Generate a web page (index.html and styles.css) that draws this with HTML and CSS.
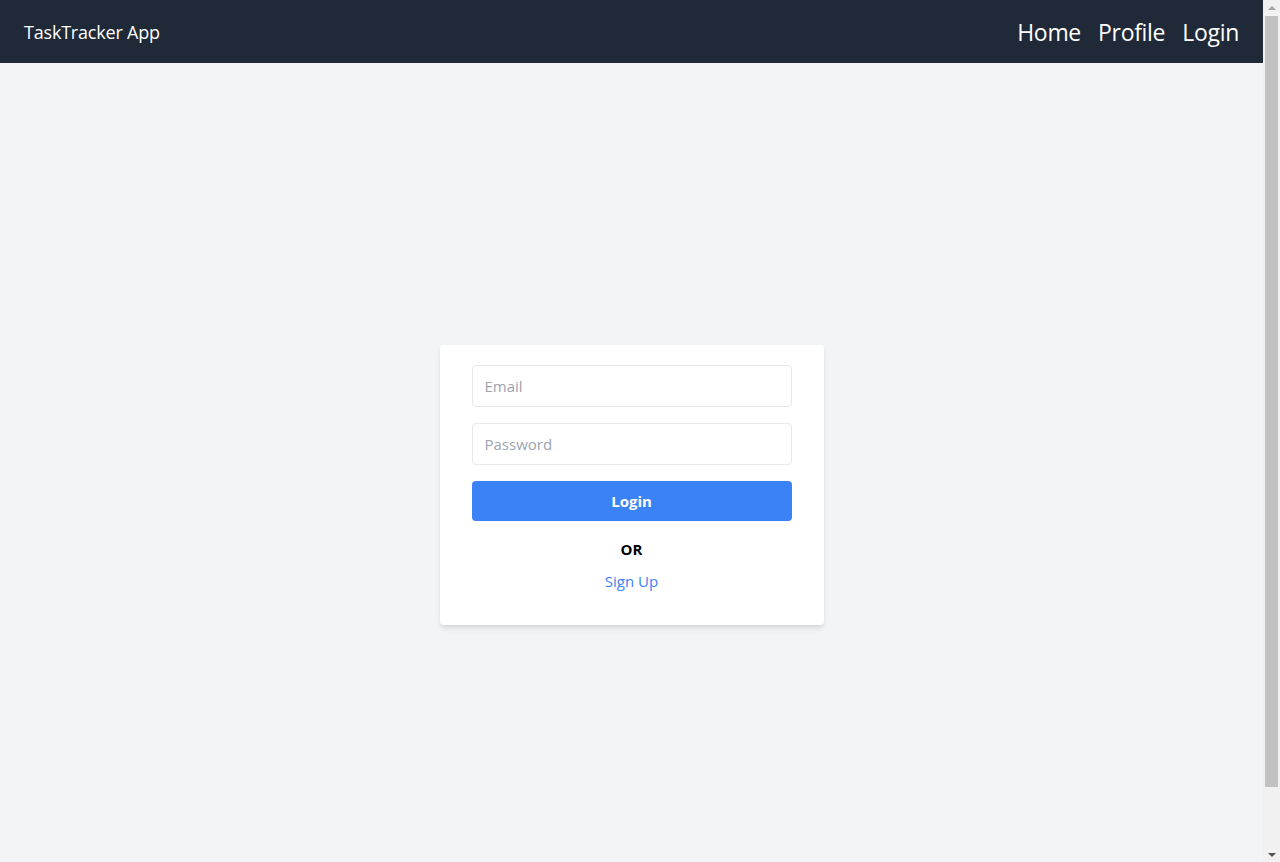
FILE: index.html
```html
<!DOCTYPE html>
<html lang="en">
<head>
<meta charset="utf-8">
<title>TaskTracker App</title>
<link rel="stylesheet" href="styles.css">
</head>
<body>
<div class="page">
  <header class="topbar">
    <div class="brand">TaskTracker App</div>
    <nav class="nav">
      <a href="#" class="nav-link">Home</a>
      <a href="#" class="nav-link">Profile</a>
      <a href="#" class="nav-link">Login</a>
    </nav>
  </header>
  <main class="main">
    <form class="card">
      <input class="field" type="email" placeholder="Email">
      <input class="field" type="password" placeholder="Password">
      <button class="btn" type="button">Login</button>
      <div class="or">OR</div>
      <a href="#" class="signup">Sign Up</a>
    </form>
  </main>
</div>
<div class="scrollbar" aria-hidden="true">
  <div class="sb-arrow sb-up"></div>
  <div class="sb-track"><div class="sb-thumb"></div></div>
  <div class="sb-arrow sb-down"></div>
</div>
</body>
</html>
```

FILE: styles.css
```css
* { box-sizing: border-box; }
html, body { margin: 0; padding: 0; }
body {
  font-family: "Open Sans", "Noto Sans", sans-serif;
  background: #f3f4f6;
  color: #000;
}
.page {
  margin-right: 17px;
}
.topbar {
  height: 63px;
  background: #1f2937;
  display: flex;
  align-items: center;
  justify-content: space-between;
  padding: 0 24px;
}
.brand {
  color: #fff;
  font-size: 18px;
  letter-spacing: -0.2px;
}
.nav {
  display: flex;
  gap: 17px;
}
.nav-link {
  color: #fff;
  text-decoration: none;
  font-size: 23px;
  letter-spacing: -0.3px;
}
.main {
  min-height: 862px;
  display: flex;
  align-items: center;
  justify-content: center;
  padding-bottom: 18px;
}
.card {
  width: 384px;
  background: #fff;
  border-radius: 4px;
  box-shadow: 0 4px 6px -1px rgba(0,0,0,0.1), 0 2px 4px -2px rgba(0,0,0,0.1);
  padding: 20px 32px 32px;
  display: flex;
  flex-direction: column;
  align-items: stretch;
}
.field {
  height: 42px;
  border: 1px solid #e5e7eb;
  border-radius: 4px;
  padding: 0 12px;
  font-family: inherit;
  font-size: 15px;
  color: #111827;
  margin-bottom: 16px;
  outline: none;
}
.field::placeholder { color: #9ca3af; }
.btn {
  height: 40px;
  border: none;
  border-radius: 4px;
  background: #3b82f6;
  color: #fff;
  font-family: inherit;
  font-weight: 700;
  font-size: 15px;
}
.or {
  margin-top: 16px;
  text-align: center;
  font-weight: 700;
  font-size: 15px;
  line-height: 24px;
}
.signup {
  margin-top: 8px;
  text-align: center;
  color: #3b82f6;
  text-decoration: none;
  font-size: 15px;
  line-height: 24px;
  align-self: center;
}
.scrollbar {
  position: fixed;
  top: 0;
  right: 0;
  bottom: 0;
  width: 17px;
  background: #f1f1f1;
  display: flex;
  flex-direction: column;
}
.sb-arrow {
  height: 15px;
  display: flex;
  align-items: center;
  justify-content: center;
}
.sb-up::before {
  content: "";
  border-left: 4px solid transparent;
  border-right: 4px solid transparent;
  border-bottom: 4px solid #a3a3a3;
}
.sb-down::before {
  content: "";
  border-left: 4px solid transparent;
  border-right: 4px solid transparent;
  border-top: 4px solid #505050;
}
.sb-track {
  flex: 1;
  padding: 1px 2px 0;
}
.sb-thumb {
  height: 771px;
  background: #c1c1c1;
}
```
